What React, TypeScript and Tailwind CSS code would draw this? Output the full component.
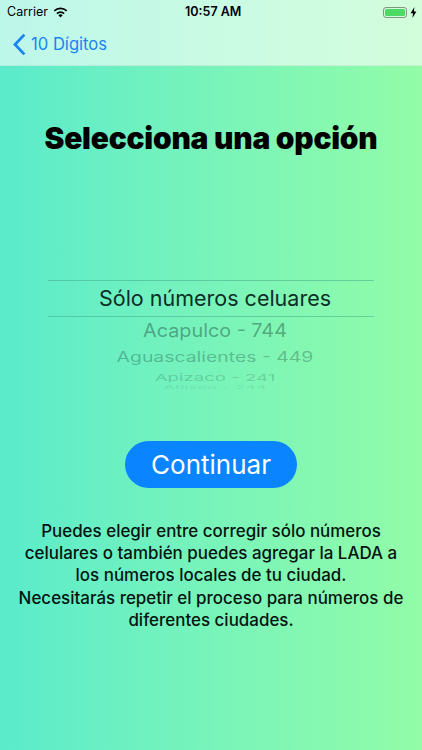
const sans = "font-['Inter','Liberation_Sans',sans-serif]";

function StatusBar() {
	return (
		<div className="relative flex h-[22px] items-center justify-between pl-[7px] pr-[5px] pt-0.5 text-[12.5px] text-black">
			<div className="flex items-center gap-[5px]">
				<span>Carrier</span>
				<svg width="15" height="11" viewBox="0 0 15 11" aria-hidden>
					<path d="M7.5 10.6 L5.4 8.2 A3.1 3.1 0 0 1 9.6 8.2 Z" fill="#000" />
					<path d="M3.9 6.6 A5.4 5.4 0 0 1 11.1 6.6" fill="none" stroke="#000" strokeWidth="1.7" />
					<path d="M1.3 3.9 A9 9 0 0 1 13.7 3.9" fill="none" stroke="#000" strokeWidth="1.7" />
				</svg>
			</div>
			<span className="absolute left-[185px] font-semibold">10:57 AM</span>
			<div className="flex items-center gap-[3px]">
				<div className="flex h-[11px] w-6 items-center rounded-[3px] border border-black/40 p-px">
					<div className="h-full w-full rounded-[1.5px] bg-[#4cd964]" />
				</div>
				<svg width="7" height="11" viewBox="0 0 7 11" aria-hidden>
					<path d="M4.4 0 L0.6 6.2 H3 L2.4 11 L6.4 4.6 H3.9 Z" fill="#000" />
				</svg>
			</div>
		</div>
	);
}

function Picker() {
	return (
		<div className="mx-[48px] mt-[124px] flex flex-col items-center overflow-hidden text-center">
			<div className="h-[37px] w-full border-y border-[#3f9a84]/45 pl-2 text-[21.5px] leading-[35px] text-[#0d2f28]">
				Sólo números celuares
			</div>
			<div className="h-[27px] scale-y-[0.93] pl-2 text-[19.8px] leading-[27px] text-[#0d2f28]/40">Acapulco - 744</div>
			<div className="h-[26px] scale-y-[0.72] whitespace-nowrap pl-2 text-[19.4px] leading-[26px] text-[#0d2f28]/30">
				Aguascalientes - 449
			</div>
			<div className="h-[14px] scale-y-[0.5] whitespace-nowrap pl-2 text-[18.6px] leading-[14px] text-[#0d2f28]/20">
				Apizaco - 241
			</div>
			<div className="h-[5px] scale-y-[0.3] whitespace-nowrap pl-2 text-[17px] leading-[8px] text-[#0d2f28]/10">
				Atlixco - 244
			</div>
		</div>
	);
}

export default function App() {
	return (
		<div className={`${sans} flex h-[750px] w-[422px] flex-col overflow-hidden bg-gradient-to-r from-[#5aebcb] to-[#92fca7]`}>
			<header className="h-[66px] border-b border-black/5 bg-white/60">
				<StatusBar />
				<div className="flex h-[43px] items-center gap-[5px] pl-[13px] pt-px text-[#1a84f0]">
					<svg width="13" height="23" viewBox="0 0 13 23" fill="none" aria-hidden>
						<path d="M11.4 1.6 L2 11.5 L11.4 21.4" stroke="currentColor" strokeWidth="2.8" />
					</svg>
					<span className="text-[16.6px]">10 Dígitos</span>
				</div>
			</header>
			<h1 className="mt-[54px] whitespace-nowrap text-center text-[29.9px] font-black leading-[36px] tracking-[-0.2px] text-black">
				Selecciona una opción
			</h1>
			<Picker />
			<button
				type="button"
				className="mx-auto mt-[52px] h-[47px] w-[172px] rounded-full bg-[#0a84ff] text-[26px] text-white"
			>
				Continuar
			</button>
			<p className="mt-[32px] whitespace-nowrap text-center text-[16.95px] font-medium leading-[22.2px] text-[#06140f]">
				Puedes elegir entre corregir sólo números
				<br />
				celulares o también puedes agregar la LADA a
				<br />
				los números locales de tu ciudad.
				<br />
				Necesitarás repetir el proceso para números de
				<br />
				diferentes ciudades.
			</p>
		</div>
	);
}
